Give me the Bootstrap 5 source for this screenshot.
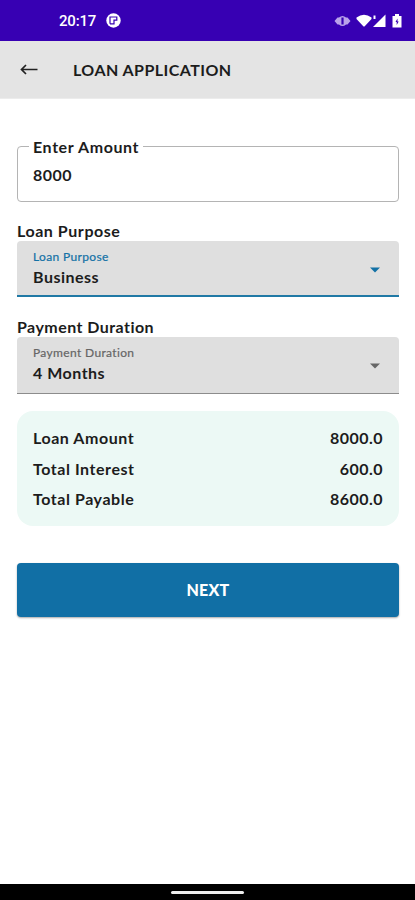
<!DOCTYPE html>
<html lang="en">
<head>
<meta charset="utf-8">
<meta name="viewport" content="width=device-width, initial-scale=1">
<title>Loan Application</title>
<link href="https://cdn.jsdelivr.net/npm/bootstrap@5.3.0/dist/css/bootstrap.min.css" rel="stylesheet">
<style>
  body { font-family: Lato, "Open Sans", sans-serif; font-weight: 700; font-size: 16px; line-height: 20px; color: #1c1c1c; letter-spacing: .55px; height: 900px; overflow: hidden; }
  svg { display: block; flex: none; }
  .status { height: 41px; background: #3700b3; font-family: Roboto, sans-serif; font-weight: 500; font-size: 15px; letter-spacing: -.2px; padding: 0 12px 0 59px; }
  .status .app { margin-left: 10px; }
  .appbar { height: 58px; background: #e4e4e4; padding-left: 20px; gap: 35px; border-bottom: 1px solid #ececec; }
  .appbar h1 { font-size: 16px; font-weight: 700; letter-spacing: .45px; line-height: 20px; }
  main { padding: 0 16px 0 17px; }
  .amount { height: 56px; margin-top: 47px; border: 1px solid #b4b4b4; border-radius: 4px; padding: 0 15px; }
  .amount label { margin: -11px 0 0 -4px; padding: 0 4px; background: #fff; line-height: 22px; align-self: flex-start; letter-spacing: .6px; }
  .amount output { margin-top: 7px; line-height: 20px; letter-spacing: .5px; }
  .field-title { height: 20px; line-height: 20px; margin-top: 19px; }
  .field-title.second { line-height: 19px; margin-top: 20px; letter-spacing: .45px; }
  .picker { height: 57px; background: #dfdfdf; border-bottom: 1px solid #8c8c8c; border-radius: 4px 4px 0 0; padding: 8px 19px 0 16px; color: #666; }
  .picker.on { height: 56px; border-bottom: 2px solid #2079a5; color: #1371a6; }
  .picker small { font-size: 12px; line-height: 16px; font-weight: 400; letter-spacing: .35px; -webkit-text-stroke: .2px; }
  .picker .value { color: #1c1c1c; line-height: 20px; margin-top: 2px; letter-spacing: .5px; }
  .summary { margin-top: 17px; height: 115px; background: #ecf9f5; border-radius: 16px; padding: 17px 16px; }
  .summary .line { height: 20px; margin-bottom: 10.5px; }
  .summary .line span:last-child { letter-spacing: .45px; }
  .next { margin-top: 37px; height: 54px; background: #116fa5; color: #fff; border: 0; border-radius: 4px; font-weight: 900; font-size: 16px; letter-spacing: .2px; box-shadow: 0 1px 2px #0005; }
  .navpill { height: 16px; background: #000; }
  .navpill span { width: 73px; height: 3px; border-radius: 2px; background: #eee; }
</style>
<script src="https://cdn.jsdelivr.net/npm/bootstrap@5.3.0/dist/js/bootstrap.bundle.min.js"></script>
</head>
<body class="d-flex flex-column bg-white">
  <div class="status d-flex align-items-center text-white">
    <span>20:17</span>
    <svg class="app" width="15" height="15" viewBox="0 0 15 15"><circle cx="7.500" cy="7.500" r="7.200" fill="#fff"/><path d="M4 10.800V4h6.800v3.200H8v3.600H4" fill="none" stroke="#3700b3" stroke-width="1.200"/></svg>
    <svg class="ms-auto" width="69" height="16" viewBox="0 0 69 16">
      <path d="M0.500 8l3-3.500h1.500q3.500-3 7 0h1.500l3 3.500-3 3.500h-1.500q-3.500 3-7 0H3.500z" fill="#b9a2ea"/><path d="M8.500 4.500v7" stroke="#3700b3" stroke-width="2.200"/>
      <path d="M22.500 4.500q7.500-5.500 15 0v1.500L30.500 13.500h-1L22.500 6z" fill="#fff"/>
      <path d="M51.500 1.500v12.500H39z" fill="#fff"/><path d="M40.500 2.500v3.500" stroke="#fff" stroke-width="2"/>
      <path d="M58.500 3H61V1h4v2h2.500v11.500h-9z" fill="#fff"/><path d="M63.500 5.500l-2 3.500h1.200v3L64.700 8.500h-1.200z" fill="#3700b3"/>
    </svg>
  </div>
  <header class="appbar d-flex align-items-center">
    <svg width="18" height="14" viewBox="0 0 18 14" fill="none" stroke="#222" stroke-width="1.700"><path d="M6 2L1.500 6.500 6 11M1.500 6.500H17.500"/></svg>
    <h1 class="m-0">LOAN APPLICATION</h1>
  </header>
  <main class="flex-grow-1 d-flex flex-column">
    <div class="amount d-flex flex-column">
      <label>Enter Amount</label>
      <output>8000</output>
    </div>
    <div class="field-title">Loan Purpose</div>
    <div class="picker on d-flex justify-content-between">
      <div class="d-flex flex-column"><small>Loan Purpose</small><span class="value">Business</span></div>
      <svg class="mt-3" width="10" height="10" viewBox="0 0 10 10"><path d="M0 2.500h10L5 7.500z" fill="currentColor"/></svg>
    </div>
    <div class="field-title second">Payment Duration</div>
    <div class="picker d-flex justify-content-between">
      <div class="d-flex flex-column"><small>Payment Duration</small><span class="value">4 Months</span></div>
      <svg class="mt-3" width="10" height="10" viewBox="0 0 10 10"><path d="M0 2.500h10L5 7.500z" fill="currentColor"/></svg>
    </div>
    <section class="summary">
      <div class="line d-flex justify-content-between"><span>Loan Amount</span><span>8000.0</span></div>
      <div class="line d-flex justify-content-between"><span>Total Interest</span><span>600.0</span></div>
      <div class="line d-flex justify-content-between"><span>Total Payable</span><span>8600.0</span></div>
    </section>
    <button class="next btn w-100" type="button">NEXT</button>
  </main>
  <footer class="navpill d-flex justify-content-center align-items-center"><span></span></footer>
</body>
</html>
